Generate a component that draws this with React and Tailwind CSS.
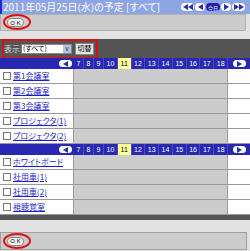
import React from "react";

const jp = { fontFamily: '"Noto Sans CJK JP", "Liberation Sans", sans-serif', fontFeatureSettings: '"palt"' };

const hours = ["7", "8", "9", "10", "11", "12", "13", "14", "15", "16", "17", "18"];

function Tri({ dir = "left", color = "#2a2ab4" }) {
    return (
        <svg width="5" height="6" viewBox="0 0 5 6">
            {dir === "left" ? <path d="M0 3 L5 0 L5 6 Z" fill={color} /> : <path d="M5 3 L0 0 L0 6 Z" fill={color} />}
        </svg>
    );
}

function NavBtn({ children, w = "w-[10px]" }) {
    return (
        <div className={`${w} h-[8px] rounded-full bg-white flex items-center justify-center`}>{children}</div>
    );
}

function OkButton() {
    return (
        <div className="relative">
            <div className="w-[17px] h-[9px] rounded-[4px] bg-[#f2f2f2] border border-[#888] flex items-center justify-center text-[6px] leading-none text-black tracking-[2px] pl-[2px] font-['Liberation_Sans']">
                OK
            </div>
            <div className="absolute left-[-4px] top-[-4px] w-[28px] h-[16px] rounded-[50%] border-2 border-[#e01010]" />
        </div>
    );
}

function HeaderRow() {
    return (
        <div className="flex h-[11px] bg-[#2828b2]">
            <div className="w-[74px] flex items-center justify-end pr-[2px]">
                <div className="w-[13px] h-[7px] rounded-full bg-white flex items-center justify-center">
                    <Tri dir="left" />
                </div>
            </div>
            <div className="w-[154px] flex">
                {hours.map((h) => (
                    <div
                        key={h}
                        className={`${h.length === 1 ? "w-[10px]" : "flex-1"} border-r border-[#4a4ac8] flex items-center justify-center text-[7px] leading-none font-['Liberation_Sans'] ${h === "11" ? "bg-[#ffff99] text-black" : "text-white"}`}
                    >
                        {h}
                    </div>
                ))}
            </div>
            <div className="flex-1 flex items-center justify-center">
                <div className="w-[13px] h-[7px] rounded-full bg-white flex items-center justify-center">
                    <Tri dir="right" />
                </div>
            </div>
        </div>
    );
}

function ItemRow({ name }) {
    return (
        <div className="flex h-[15px] border-b border-[#9a9a9a]">
            <div className="w-[74px] bg-white border-r border-[#9a9a9a] flex items-center pl-[3px] gap-[2px]">
                <div className="w-[8px] h-[8px] border border-[#777] bg-white" />
                <span className="text-[8px] leading-none text-[#1c1ccc] underline whitespace-nowrap" style={jp}>
                    {name}
                </span>
            </div>
            <div className="w-[154px] bg-[#cccccc] border-r border-[#9a9a9a]" />
            <div className="flex-1 bg-white" />
        </div>
    );
}

export default function App() {
    return (
        <div className="w-[250px] h-[251px] bg-[#e2e2e2] overflow-hidden flex flex-col" style={jp}>
            <div className="h-[14px] flex items-center bg-[#8ea5e4] border-l-2 border-[#1c2bd0] pl-[1px]">
                <span className="text-white text-[10px] leading-none whitespace-nowrap">2011年05月25日(水)の予定 [すべて]</span>
                <div className="ml-auto flex items-center gap-[1px] pr-[5px]">
                    <NavBtn w="w-[13px]">
                        <Tri dir="left" />
                        <Tri dir="left" />
                    </NavBtn>
                    <NavBtn>
                        <Tri dir="left" />
                    </NavBtn>
                    <div className="w-[14px] h-[8px] rounded-full bg-[#2020a8] flex items-center justify-center text-white text-[5px] leading-none">今日</div>
                    <NavBtn>
                        <Tri dir="right" />
                    </NavBtn>
                    <NavBtn w="w-[13px]">
                        <Tri dir="right" />
                        <Tri dir="right" />
                    </NavBtn>
                </div>
            </div>
            <div className="h-[17px] mr-[4px] bg-[#cccccc] border border-[#b0b0b0] flex items-center pl-[6px]">
                <OkButton />
            </div>
            <div className="h-[8px]" />
            <div className="h-[19px] bg-[#555555] flex items-center">
                <div className="ml-[2px] h-[20px] w-[96px] border-2 border-[#e01010] flex items-center">
                    <span className="shrink-0 whitespace-nowrap text-[8px] leading-none text-[#dddddd]">表示</span>
                    <div className="ml-[1px] shrink-0 w-[51px] h-[10px] bg-white border border-[#888] flex items-center">
                        <span className="flex-1 whitespace-nowrap text-[7px] leading-none text-black pl-[1px]">(すべて)</span>
                        <div className="w-[8px] h-full bg-[#b8c4dc] flex items-center justify-center text-[6px] leading-none text-[#223]">v</div>
                    </div>
                    <div className="ml-[3px] shrink-0 w-[19px] h-[12px] bg-[#e6e6e6] border border-[#888] flex items-center justify-center text-[7px] leading-none text-black whitespace-nowrap">
                        切替
                    </div>
                </div>
            </div>
            <HeaderRow />
            {["第1会議室", "第2会議室", "第3会議室", "プロジェクタ(1)", "プロジェクタ(2)"].map((n) => (
                <ItemRow key={n} name={n} />
            ))}
            <HeaderRow />
            {["ホワイトボード", "社用車(1)", "社用車(2)", "視聴覚室"].map((n) => (
                <ItemRow key={n} name={n} />
            ))}
            <div className="h-[5px] bg-[#555555]" />
            <div className="h-[12px]" />
            <div className="h-[18px] mr-[3px] bg-[#cccccc] border border-[#a0a0a0] flex items-center pl-[6px]">
                <OkButton />
            </div>
        </div>
    );
}
